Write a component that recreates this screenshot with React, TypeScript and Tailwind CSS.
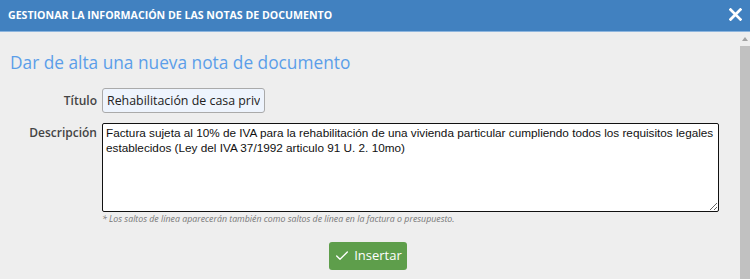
import { Check } from "lucide-react";

export default function App() {
  return (
    <div className="w-[750px] h-[279px] overflow-hidden bg-[#eeeeee] flex flex-col font-['Open_Sans',sans-serif]">
      {/* Cabecera del diálogo */}
      <header className="h-[32px] shrink-0 bg-[#4181c0] border-b border-[#8db5de] flex items-center justify-between pl-[8px] pr-[8px]">
        <span className="text-white text-[10.6px] font-bold">
          GESTIONAR LA INFORMACIÓN DE LAS NOTAS DE DOCUMENTO
        </span>
        <svg width="13" height="13" viewBox="0 0 12 12" className="mt-[-2px]">
          <path d="M1.5 1.5 L10.5 10.5 M10.5 1.5 L1.5 10.5" stroke="white" strokeWidth="2.6" strokeLinecap="square" />
        </svg>
      </header>

      <div className="flex-1 flex min-h-0">
        <main className="flex-1 pl-[10px] pt-[19px]">
          <h1 className="text-[17.3px] leading-[24px] text-[#5b9ee9]">
            Dar de alta una nueva nota de documento
          </h1>

          <div className="mt-[13px] flex items-center">
            <label className="w-[87px] text-right text-[12px] font-semibold text-[#444]">Título</label>
            <input
              defaultValue="Rehabilitación de casa privada"
              className="ml-[5px] w-[163px] h-[25px] px-[4px] text-[12.4px] text-[#222] bg-[#eef4fd] border border-[#aaaaaa] rounded-[3px] outline-none"
            />
          </div>

          <div className="mt-[10px] flex items-start">
            <label className="w-[87px] text-right text-[12px] font-semibold text-[#444] mt-[1px]">Descripción</label>
            <div className="ml-[5px] flex flex-col">
              <textarea
                defaultValue="Factura sujeta al 10% de IVA para la rehabilitación de una vivienda particular cumpliendo todos los requisitos legales establecidos (Ley del IVA 37/1992 articulo 91 U. 2. 10mo)"
                className="w-[617px] h-[89px] px-[3px] py-[1px] text-[11.75px] leading-[15px] text-[#111] bg-white border-[1.5px] border-[#111] rounded-[2px] outline-none font-['Liberation_Sans',Arial,sans-serif]"
              />
              <p className="mt-[1px] text-[8.8px] italic text-[#777] leading-[12px]">
                * Los saltos de línea aparecerán también como saltos de línea en la factura o presupuesto.
              </p>
            </div>
          </div>

          <div className="mt-[17px] flex justify-center pr-[14px]">
            <button className="w-[78px] h-[28px] bg-[#5e9e4b] rounded-[3px] text-white text-[13px] flex items-center justify-center gap-[4px]">
              <Check size={16} strokeWidth={2} />
              Insertar
            </button>
          </div>
        </main>

        {/* Barra de desplazamiento */}
        <div className="w-[10px] shrink-0 flex flex-col items-center pt-[5px]">
          <svg width="6" height="4" viewBox="0 0 6 4" className="mb-[5px]">
            <path d="M0 4 L3 0 L6 4 Z" fill="#a3a3a3" />
          </svg>
          <div className="w-full flex-1 bg-[#c1c1c1]" />
        </div>
      </div>
    </div>
  );
}
